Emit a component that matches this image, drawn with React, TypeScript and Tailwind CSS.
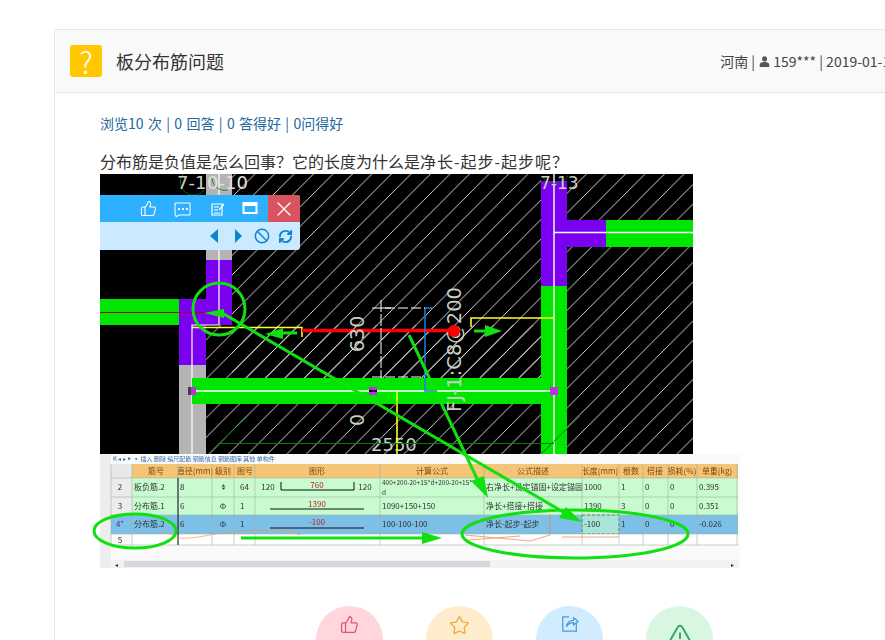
import React from 'react';
import { ThumbsUp, Star, TriangleAlert, Ban, RefreshCw, X } from 'lucide-react';

const CJK = '"Noto Sans CJK SC", "Noto Sans", sans-serif';

const GREEN = '#00e600';
const MARK = '#10e010';

const COLUMNS = [111, 132, 178, 212, 234, 255, 380, 484, 582, 619, 643, 668, 697, 737];

const HEADERS = [
    { x: 156, label: '筋号' },
    { x: 195, label: '直径(mm)' },
    { x: 223, label: '级别' },
    { x: 245, label: '图号' },
    { x: 317, label: '图形' },
    { x: 432, label: '计算公式' },
    { x: 533, label: '公式描述' },
    { x: 600, label: '长度(mm)' },
    { x: 631, label: '根数' },
    { x: 655, label: '搭接' },
    { x: 682, label: '损耗(%)' },
    { x: 717, label: '单重(kg)' },
];

const ROWS = [
    { y: 478, h: 19, bg: '#c8fbcf', no: '2', name: '板负筋.2', d: '8', grade: '⌽', fig: '64', formula: '400+200-20+15*d+200-20+15*', desc: '右净长+设定锚固+设定锚固', len: '1000', n: '1', w: '0.395' },
    { y: 497, h: 18, bg: '#c8fbcf', no: '3', name: '分布筋.1', d: '6', grade: 'Φ', fig: '1', formula: '1090+150+150', desc: '净长+搭接+搭接', len: '1390', n: '3', w: '0.351' },
    { y: 515, h: 19, bg: '#7cc0e8', no: '4*', name: '分布筋.2', d: '6', grade: 'Φ', fig: '1', formula: '100-100-100', desc: '净长-起步-起步', len: '-100', n: '1', w: '-0.026' },
];

function Cad() {
    return (
        <g>
            <rect x="100" y="174" width="593" height="280" fill="#000" />
            <rect x="232" y="174" width="309" height="204" fill="url(#hatch)" />
            <rect x="206" y="325" width="335" height="129" fill="url(#hatch)" />
            <rect x="567" y="174" width="126" height="280" fill="url(#hatch)" />

            {/* left wall */}
            <rect x="206" y="174" width="26" height="86" fill="#b4b4b4" />
            <rect x="206" y="260" width="26" height="65" fill="#7a00f0" />
            <rect x="179" y="299" width="53" height="26" fill="#7a00f0" />
            <rect x="179" y="299" width="27" height="66" fill="#7a00f0" />
            <rect x="179" y="365" width="27" height="89" fill="#b4b4b4" />
            <rect x="100" y="299" width="79" height="26" fill={GREEN} />
            <line x1="100" y1="312.5" x2="220" y2="312.5" stroke="#b00020" />
            <path d="M219 174V325H192V454" fill="none" stroke="#fff" strokeWidth="1.2" />

            {/* right wall */}
            <rect x="541" y="181" width="26" height="105" fill="#7a00f0" />
            <rect x="541" y="286" width="26" height="168" fill={GREEN} />
            <rect x="567" y="220" width="39" height="27" fill="#7a00f0" />
            <rect x="606" y="220" width="87" height="27" fill={GREEN} />
            <path d="M554 174V454M554 232.5H693" fill="none" stroke="#fff" strokeWidth="1.4" />

            {/* bottom beam */}
            <rect x="192" y="378" width="349" height="26" fill={GREEN} />
            <line x1="192" y1="391" x2="554" y2="391" stroke="#fff" strokeWidth="1.5" />
            <rect x="190" y="387" width="6" height="8" fill="#c030e0" />
            <rect x="188" y="387" width="3" height="8" fill="#444" />
            <rect x="369" y="387" width="8" height="8" fill="#c030e0" />
            <rect x="550" y="387" width="8" height="8" fill="#c030e0" />
            <rect x="369" y="390" width="8" height="2" fill="#000" />

            {/* labels */}
            <g fill="none" stroke="#0a7a0a" strokeWidth="0.8">
                <path d="M183 174A13 13 0 0 0 204 190" />
                <path d="M212 176A13 13 0 0 0 228 190" />
                <path d="M542 176A15 15 0 0 0 568 176" />
            </g>
            <g fill="#c8d0c8" fontFamily='"DejaVu Sans", sans-serif' fontSize="18">
                <text x="177" y="189">7-1</text>
                <text x="207" y="189" fill="#e0e0e0">0-10</text>
                <text x="540" y="189" fontSize="17">7-13</text>
                <text x="371" y="451" fontSize="18">2550</text>
                <text transform="translate(364 426) rotate(-90)" fontSize="19">0</text>
                <text transform="translate(461 412) rotate(-90)" fontSize="19.5">FJ-1:C8@200</text>
            </g>

            {/* rebar */}
            <path d="M192 327.5H302V337" fill="none" stroke="#ffff20" strokeWidth="1.6" />
            <path d="M471 327V318H554" fill="none" stroke="#ffff20" strokeWidth="1.6" />
            <line x1="397" y1="391" x2="397" y2="454" stroke="#ffff20" strokeWidth="1.6" />
            <line x1="302" y1="330.5" x2="455" y2="330.5" stroke="#ff0000" strokeWidth="3.5" />
            <circle cx="454" cy="331" r="6" fill="#ff0000" />
            <path d="M433 308H425V391H436" fill="none" stroke="#1a7fe0" strokeWidth="1.5" />
            <line x1="385" y1="308" x2="425" y2="308" stroke="#fff" strokeDasharray="10 3" />
            <line x1="381" y1="300" x2="381" y2="378" stroke="#fff" strokeDasharray="12 2" />
            <line x1="372" y1="308" x2="391" y2="308" stroke="#fff" />
            <line x1="372" y1="377" x2="425" y2="377" stroke="#fff" strokeDasharray="10 3" />
            <line x1="218" y1="443.5" x2="554" y2="443.5" stroke="#0a7a0a" />
            <line x1="210" y1="454" x2="246" y2="416" stroke="#0a7a0a" />
            <line x1="541" y1="454" x2="580" y2="416" stroke="#0a7a0a" />
            <text transform="translate(364 352) rotate(-90)" fill="#c8d0c8" fontFamily='"DejaVu Sans", sans-serif' fontSize="19">630</text>
        </g>
    );
}

function Toolbar() {
    return (
        <g>
            <path d="M100 195H297a3 3 0 0 1 3 3V247a3 3 0 0 1-3 3H100Z" fill="#cbeaff" />
            <path d="M100 195H297a3 3 0 0 1 3 3V222H100Z" fill="#2db0ff" />
            <path d="M268 195H297a3 3 0 0 1 3 3V222H268Z" fill="#d9535f" />
            <ThumbsUp x={140} y={200} width={17} height={17} stroke="#fff" strokeWidth={1.5} />
            <path d="M175 203H190V215H179L176 217V215H175Z" fill="none" stroke="#fff" strokeWidth="1" />
            <rect x="178" y="208" width="2" height="2" fill="#fff" />
            <rect x="182" y="208" width="2" height="2" fill="#fff" />
            <rect x="186" y="208" width="2" height="2" fill="#fff" />
            <path d="M212 204H222V215H212Z" fill="none" stroke="#fff" strokeWidth="1.2" />
            <path d="M214 207H219M214 210H218M214 213H220M219 210L224 204" fill="none" stroke="#fff" strokeWidth="1.2" />
            <rect x="243.5" y="203" width="13" height="10" fill="none" stroke="#fff" strokeWidth="2" />
            <rect x="243.5" y="203" width="13" height="3" fill="#fff" />
            <X x={272} y={197} width={24} height={24} stroke="#fff" strokeWidth={1.3} />
            <polygon points="218,229 218,243 210,236" fill="#0b85d0" />
            <polygon points="235,229 235,243 242,236" fill="#0b85d0" />
            <Ban x={254} y={228} width={16} height={16} stroke="#0b85d0" strokeWidth={2.2} />
            <RefreshCw x={278} y={229} width={15} height={15} stroke="#0b85d0" strokeWidth={3} />
        </g>
    );
}

function SteelTable() {
    return (
        <g fontFamily={CJK} fontSize="8" fill="#333" filter="url(#soft)">
            <rect x="100" y="454" width="640" height="114" fill="#fafafa" />
            <rect x="100" y="454" width="11" height="114" fill="#eeeeee" />
            <text x="113" y="461" fontSize="6" fill="#3a6ea8">K  ◂  ▸  ⯈  ▪  插入  删除  缩尺配筋  钢筋信息  钢筋图库  其他  单构件</text>
            <rect x="111" y="464" width="627" height="14" fill="#e8e8e8" />
            <rect x="132" y="464" width="606" height="14" fill="#f5c477" />
            {HEADERS.map((h) => (
                <text key={h.label} x={h.x} y="474" textAnchor="middle" fill="#7a4a10">{h.label}</text>
            ))}
            {ROWS.map((r) => (
                <g key={r.no}>
                    <rect x="111" y={r.y} width="21" height={r.h} fill={r.no === '4*' ? '#7cc0e8' : '#ececec'} />
                    <rect x="132" y={r.y} width="606" height={r.h} fill={r.bg} />
                    <text x="120" y={r.y + 12} textAnchor="middle" fill={r.no === '4*' ? '#6020a0' : '#333'}>{r.no}</text>
                    <text x="134" y={r.y + 12}>{r.name}</text>
                    <text x="180" y={r.y + 12}>{r.d}</text>
                    <text x="223" y={r.y + 12} textAnchor="middle">{r.grade}</text>
                    <text x="240" y={r.y + 12}>{r.fig}</text>
                    <text x="382" y={r.no === '2' ? r.y + 7 : r.y + 12} fontSize={r.no === '2' ? 6.5 : 8}>{r.formula}</text>
                    <text x="486" y={r.y + 12}>{r.desc}</text>
                    <text x="584" y={r.y + 12}>{r.len}</text>
                    <text x="621" y={r.y + 12}>{r.n}</text>
                    <text x="645" y={r.y + 12}>0</text>
                    <text x="670" y={r.y + 12}>0</text>
                    <text x="699" y={r.y + 12}>{r.w}</text>
                </g>
            ))}
            <text x="382" y="495" fontSize="6.5">d</text>
            <rect x="582" y="515" width="37" height="19" fill="#a8e4da" stroke="#666" strokeDasharray="3 2" />
            <text x="584" y="527">-100</text>

            {/* row 5 */}
            <text x="120" y="543" textAnchor="middle">5</text>
            <rect x="132" y="534" width="606" height="11" fill="#fff" />
            {COLUMNS.map((x) => (
                <line key={x} x1={x} y1="464" x2={x} y2="545" stroke="#9db5a0" strokeWidth="0.6" />
            ))}
            {[478, 497, 515, 534, 545].map((y) => (
                <line key={y} x1="111" y1={y} x2="738" y2={y} stroke="#9db5a0" strokeWidth="0.6" />
            ))}
            <line x1="178" y1="478" x2="178" y2="545" stroke="#111" />

            {/* bar shapes */}
            <text x="268" y="490" textAnchor="middle">120</text>
            <path d="M281 482V490H354V482" fill="none" stroke="#111" strokeWidth="1" />
            <text x="317" y="488" textAnchor="middle" fill="#c02020">760</text>
            <text x="365" y="490" textAnchor="middle">120</text>
            <line x1="270" y1="509" x2="364" y2="509" stroke="#111" />
            <text x="317" y="507" textAnchor="middle" fill="#c02020">1390</text>
            <line x1="270" y1="528" x2="364" y2="528" stroke="#111" />
            <text x="317" y="525" textAnchor="middle" fill="#c02020">-100</text>

            {/* hand scribbles */}
            <path d="M160 533Q170 532 178 538Q190 539 210 535T260 530T300 535" fill="none" stroke="#e89a60" strokeWidth="0.7" />
            <path d="M465 535L530 541L550 535V514M562 537H619" fill="none" stroke="#e8824a" strokeWidth="0.7" />
            <path d="M468 540L520 536" fill="none" stroke="#e8824a" strokeWidth="0.7" />

            {/* scrollbar */}
            <rect x="111" y="560" width="627" height="8" fill="#f2f2f2" />
            <rect x="124" y="561" width="366" height="6" fill="#d5d8dc" />
            <text x="115" y="567" fontSize="6">◂</text>
            <text x="731" y="567" fontSize="6">▸</text>
        </g>
    );
}

function Annotations() {
    return (
        <g fill="none" stroke={MARK} strokeWidth="3">
            <circle cx="219" cy="309" r="26" />
            <ellipse cx="135" cy="531" rx="41" ry="17" />
            <ellipse cx="575" cy="534" rx="113" ry="24" />
            <line x1="222" y1="313" x2="565" y2="513" />
            <line x1="409" y1="335" x2="480" y2="485" />
            <line x1="241" y1="538" x2="425" y2="538" />
            <line x1="297" y1="333" x2="280" y2="333" />
            <line x1="474" y1="331" x2="490" y2="331" />
            <g fill={MARK} stroke="none">
                <polygon points="204,313 224,309 224,318" />
                <polygon points="265,334 283,328 283,339" />
                <polygon points="502,331 485,325 485,337" />
                <polygon points="442,538 422,532 422,544" />
                <polygon points="488,498 471,481 484,476" />
                <polygon points="582,522 559,518 566,507" />
            </g>
        </g>
    );
}

function QuestionImage() {
    return (
        <svg width="640" height="394" viewBox="100 174 640 394" className="block overflow-visible">
            <defs>
                <pattern id="hatch" width="19.5" height="19.5" patternUnits="userSpaceOnUse">
                    <line x1="0" y1="19.5" x2="19.5" y2="0" stroke="#e8e8e8" strokeWidth="0.9" />
                </pattern>
                <filter id="soft" x="0" y="0" width="100%" height="100%">
                    <feGaussianBlur stdDeviation="0.3" />
                </filter>
            </defs>
            <Cad />
            <Toolbar />
            <SteelTable />
            <Annotations />
        </svg>
    );
}

function ActionButton({ color, children }: { color: string; children: React.ReactNode }) {
    return (
        <div className={`w-[67px] h-[67px] rounded-full flex justify-center shrink-0 ${color}`}>
            {children}
        </div>
    );
}

export default function App() {
    return (
        <div className="w-[885px] h-[640px] overflow-hidden bg-white pt-[29px] pl-[54px]" style={{ fontFamily: CJK }}>
            <div className="w-[880px] border border-[#e8e8e8] border-b-0">
                {/* Title bar */}
                <div className="h-[63px] bg-[#f9f9f9] border-b border-[#e5e5e5] flex items-center pl-[15px] pr-[35px]">
                    <div className="w-[32px] h-[32px] rounded-[3px] bg-[#ffc800] flex items-center justify-center text-white text-[30px] font-light leading-none">?</div>
                    <h1 className="ml-[14px] text-[18px] font-normal text-[#333]">板分布筋问题</h1>
                    <div className="ml-auto flex items-center whitespace-nowrap text-[14px] text-[#444]">
                        河南 | <svg viewBox="0 0 12 12" className="w-[11px] h-[11px] ml-[4px] mr-[3px]" fill="#555"><circle cx="6" cy="3.2" r="2.8" /><path d="M0.8 12V9.6C0.8 7.6 3 6.6 6 6.6S11.2 7.6 11.2 9.6V12Z" /></svg> 159*** | 2019-01-17
                    </div>
                </div>

                {/* Body */}
                <div className="pl-[45px]">
                    <div className="mt-[19px] text-[14px] leading-[22px] text-[#23679c] [word-spacing:1.2px]">浏览10 次 | 0 回答 | 0 答得好 | 0问得好</div>
                    <p className="mt-[15px] mb-[1px] text-[16px] leading-[24px] text-[#333]">分布筋是负值是怎么回事？它的长度为什么是<span className="tracking-[1px]">净长-起步-起步呢？</span></p>
                    <QuestionImage />

                    <div className="flex gap-[43px] pl-[216px] mt-[38px]">
                        <ActionButton color="bg-[#ffd6dc]">
                            <ThumbsUp size={19} className="mt-[9px] text-[#e0566e]" strokeWidth={1.6} />
                        </ActionButton>
                        <ActionButton color="bg-[#ffeccc]">
                            <Star size={21} className="mt-[9px] text-[#f0b040]" strokeWidth={1.6} />
                        </ActionButton>
                        <ActionButton color="bg-[#d1ecff]">
                            <svg viewBox="0 0 20 20" className="w-[18px] h-[18px] mt-[9px] text-[#4a9ad8]" fill="none" stroke="currentColor" strokeWidth="1.4">
                                <path d="M9 2H2V18H17V9" />
                                <path d="M6 13C7 8 10 6 14 6V3L19 7L14 11V8.5C11 8.5 8 10 6 13Z" />
                            </svg>
                        </ActionButton>
                        <ActionButton color="bg-[#d9f7e0]">
                            <TriangleAlert size={30} className="mt-[16px] text-[#2fa85a]" strokeWidth={1.5} />
                        </ActionButton>
                    </div>
                </div>
            </div>
        </div>
    );
}
